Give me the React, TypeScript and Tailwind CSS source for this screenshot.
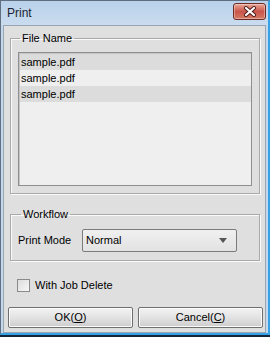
const FILES = ["sample.pdf", "sample.pdf", "sample.pdf"];

const font = "font-['Liberation_Sans',Arial,sans-serif]";

export default function App() {
  return (
    <div className={`w-[270px] h-[337px] flex flex-col bg-[#13263d] ${font} text-[11px] text-black`}>
      <div className="flex-1 flex flex-col border-t border-l border-[#5f6f80] border-r-2 border-r-[#36a2e6] border-b-2 border-b-[#36a2e6] bg-[#c4d8ed]">
        <TitleBar />
        <div className="flex-1 mx-[2px] flex flex-col bg-[#dfdfdf] border border-[#9aa5b2]">
          <FileGroup />
          <WorkflowGroup />

          <label className="flex items-center gap-[5px] ml-[13px] mt-[18px] h-[13px]">
            <span className="w-[13px] h-[13px] border border-[#8a8a8a] bg-gradient-to-br from-[#dcdcdc] to-[#f8f8f8]" />
            <span className="leading-[13px]">With Job Delete</span>
          </label>

          <div className="flex gap-[5px] ml-[4px] mt-[15px]">
            <DialogButton label="OK(" mnemonic="O" />
            <DialogButton label="Cancel(" mnemonic="C" />
          </div>
        </div>
      </div>
      <div className="h-[2px]" />
    </div>
  );
}

function TitleBar() {
  return (
    <div className="h-[24px] flex items-center pl-[6px] pr-[2px] bg-gradient-to-b from-[#b9d1ea] to-[#cadcef]">
      <span className="text-[12px] text-[#1b1f33] leading-none flex-1">Print</span>
      <button className="w-[33px] h-[17px] mb-[3px] flex items-center justify-center rounded-[3px] border border-[#6e2b26] bg-gradient-to-b from-[#e8a898] via-[#c9544a] to-[#d37a64] shadow-[inset_0_0_0_1px_rgba(255,255,255,0.35)]">
        <svg width="14" height="11" viewBox="0 0 14 11">
          <path d="M3 2 L11 9 M11 2 L3 9" stroke="#4a1a16" strokeWidth="4" strokeLinecap="round" />
          <path d="M3 2 L11 9 M11 2 L3 9" stroke="#ffffff" strokeWidth="2.2" strokeLinecap="round" />
        </svg>
      </button>
    </div>
  );
}

function FileGroup() {
  return (
    <fieldset className="ml-[6px] mt-[6px] w-[250px] border border-[#a9a9a9] shadow-[inset_1px_1px_0_#fafafa,1px_1px_0_#fafafa] px-[7px] pb-[7px]">
      <legend className="ml-[2px] px-[2px] leading-[13px]">File Name</legend>
      <div className="mt-[7px] h-[134px] border border-[#8f8f8f] bg-[#efefef] shadow-[inset_1px_1px_0_#c4c4c4] pt-[1px] pl-[1px]">
        {FILES.map((f, i) => (
          <div
            key={i}
            className={`h-[16px] leading-[16px] pl-[1px] ${i % 2 === 0 ? "bg-[#dcdcdc]" : "bg-[#efefef]"}`}
          >
            {f}
          </div>
        ))}
      </div>
    </fieldset>
  );
}

function WorkflowGroup() {
  return (
    <fieldset className="ml-[6px] mt-[14px] w-[250px] border border-[#a9a9a9] shadow-[inset_1px_1px_0_#fafafa,1px_1px_0_#fafafa] px-[7px] pb-[8px]">
      <legend className="ml-[3px] px-[2px] leading-[13px]">Workflow</legend>
      <div className="mt-[8px] flex items-center">
        <span className="w-[64px]">Print Mode</span>
        <div className="w-[155px] h-[23px] flex items-center pl-[3px] pr-[9px] rounded-[2px] border border-[#7b7b7b] bg-gradient-to-b from-[#f0f0f0] to-[#e2e2e2]">
          <span className="flex-1">Normal</span>
          <svg width="8" height="5" viewBox="0 0 8 5">
            <path d="M0 0 H8 L4 5 Z" fill="#555555" />
          </svg>
        </div>
      </div>
    </fieldset>
  );
}

function DialogButton({ label, mnemonic }: { label: string; mnemonic: string }) {
  return (
    <button className="w-[125px] h-[21px] rounded-[2px] border border-[#6f6f6f] bg-gradient-to-b from-[#f3f3f3] via-[#e3e3e3] to-[#cdcdcd] shadow-[inset_0_0_0_1px_#fbfbfb] text-[11px] leading-none">
      {label}
      <span className="underline">{mnemonic}</span>)
    </button>
  );
}
